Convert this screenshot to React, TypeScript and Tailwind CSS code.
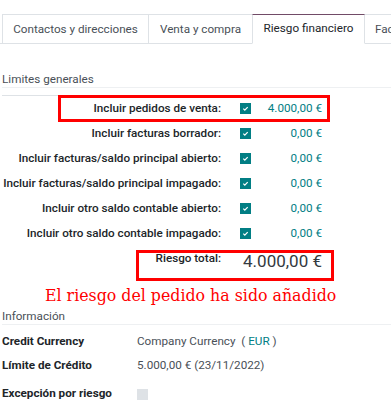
import React from 'react';

const rows = [
  { label: 'Incluir pedidos de venta:', value: '4.000,00 €' },
  { label: 'Incluir facturas borrador:', value: '0,00 €' },
  { label: 'Incluir facturas/saldo principal abierto:', value: '0,00 €' },
  { label: 'Incluir facturas/saldo principal impagado:', value: '0,00 €' },
  { label: 'Incluir otro saldo contable abierto:', value: '0,00 €' },
  { label: 'Incluir otro saldo contable impagado:', value: '0,00 €' },
];

const tabs = [
  { name: 'Contactos y direcciones', w: 'w-[147px] justify-center' },
  { name: 'Venta y compra', w: 'w-[105px] justify-center' },
  { name: 'Riesgo financiero', w: 'w-[113px] justify-center', active: true },
  { name: 'Facturación', w: 'w-[100px] pl-[10px]' },
];

const Check: React.FC = () => (
  <div className="w-[11px] h-[11px] bg-[#017e84] flex items-center justify-center">
    <svg width="7" height="7" viewBox="0 0 8 8">
      <path d="M1.5 4.2 L3.2 5.8 L6.5 2.4" stroke="white" strokeWidth="1.4" fill="none" />
    </svg>
  </div>
);

const App: React.FC = () => {
  return (
    <div className="w-[391px] h-[419px] overflow-hidden bg-white text-[11.7px] text-[#212529]" style={{ fontFamily: 'Roboto, sans-serif' }}>
      {/* tabs */}
      <div className="pt-[14px] flex border-b border-[#dee2e6] h-[44px]">
        <div className="w-[2px] shrink-0" />
        {tabs.map(t => (
          <div
            key={t.name}
            className={`${t.w} shrink-0 h-[30px] -mb-px flex items-center whitespace-nowrap overflow-hidden border-l border-r border-[#dee2e6] -mr-px ${
              t.active
                ? 'border-t border-t-[#714b67] bg-white text-[#212529] border-b border-b-white z-10'
                : 'border-t text-[#495057]'
            }`}
          >
            {t.name}
          </div>
        ))}
      </div>

      {/* Límites generales */}
      <div className="mt-[28px] px-[2px] text-[#495057] leading-[14px] h-[14px]">Limites generales</div>
      <div className="ml-[2px] mt-[1px] border-b border-[#eef0f2]" />
      <div className="ml-[2px] mt-[7px] w-[56px] border-b border-[#dee2e6]" />

      <div className="relative">
        <div className="absolute left-[58px] top-[-1px] w-[272px] h-[27px] border-[3px] border-[#ff0000]" />
        {rows.map(r => (
          <div key={r.label} className="flex items-center h-[25px] relative">
            <div className="w-[221px] text-right font-medium whitespace-nowrap">{r.label}</div>
            <div className="ml-[19px]"><Check /></div>
            <div className="w-[71px] text-right text-[#017e84]">{r.value}</div>
          </div>
        ))}

        {/* total */}
        <div className="relative flex items-start mt-[4px] h-[31px]">
          <div className="absolute left-[136px] top-0 w-[198px] h-[31px] border-[3px] border-[#ff0000]" />
          <div className="w-[221px] text-right font-medium pt-[1px] leading-[14px]">Riesgo total:</div>
          <div className="w-[101px] text-right text-[17px] leading-[22px] text-[#343a40]">4.000,00 €</div>
        </div>
      </div>

      <div className="pl-[45px] text-[#ff0000] text-[15.8px] leading-[22px] mt-[4px]" style={{ fontFamily: '"DejaVu Serif", serif' }}>
        El riesgo del pedido ha sido añadido
      </div>

      {/* Información */}
      <div className="mt-[2px] px-[2px] text-[#495057] leading-[14px] h-[14px]">Información</div>
      <div className="ml-[2px] mt-[1px] border-b border-[#eef0f2]" />

      <div className="mt-[10px] flex items-center h-[14px]">
        <div className="w-[137px] pl-[2px] font-bold">Credit Currency</div>
        <div className="text-[#495057]">
          Company Currency&nbsp;&nbsp;( <span className="text-[#017e84]">EUR</span> )
        </div>
      </div>
      <div className="mt-[10px] flex items-center h-[14px]">
        <div className="w-[137px] pl-[2px] font-bold">Límite de Crédito</div>
        <div className="text-[#495057]">5.000,00 € (23/11/2022)</div>
      </div>
      <div className="mt-[14px] flex items-center h-[14px]">
        <div className="w-[137px] pl-[2px] font-bold">Excepción por riesgo</div>
        <div className="w-[11px] h-[11px] bg-[#dee2e6]" />
      </div>
    </div>
  );
};

export default App;
